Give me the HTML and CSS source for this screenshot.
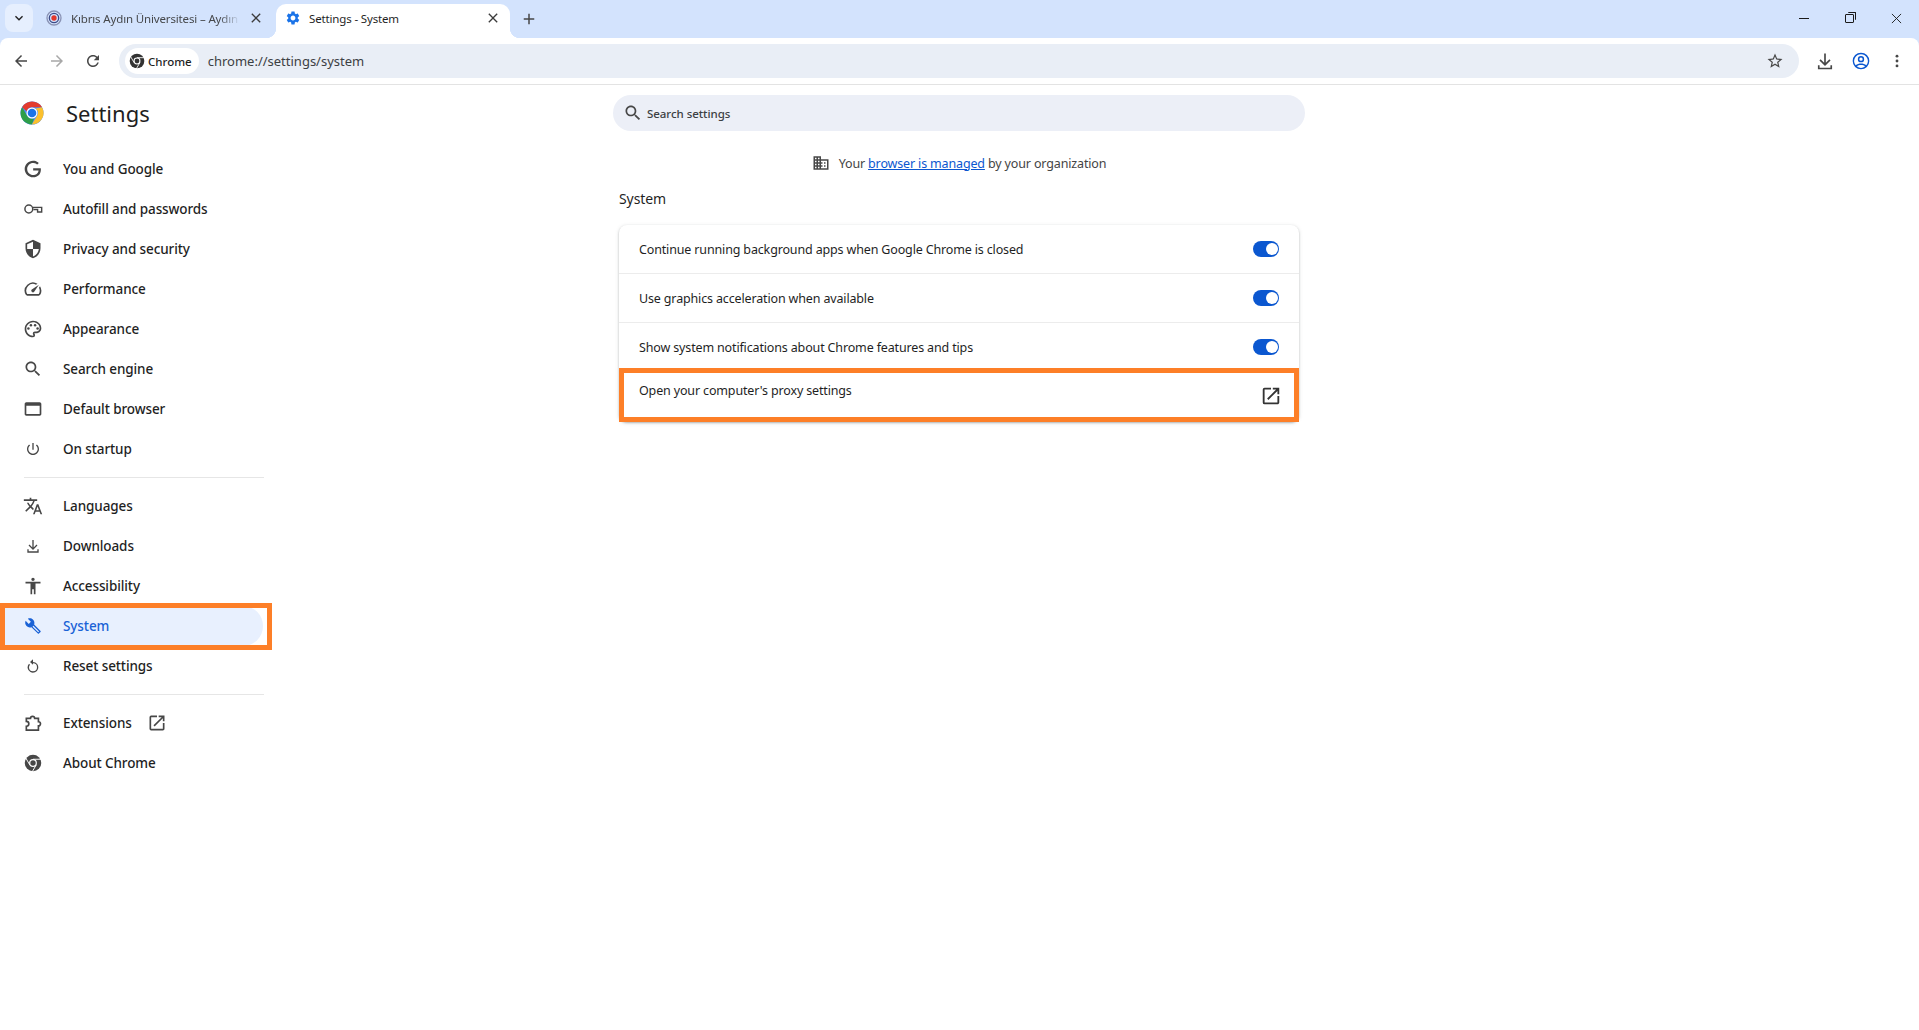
FILE: index.html
```html
<!DOCTYPE html>
<html lang="en">
<head>
  <meta charset="UTF-8" />
  <title>Settings - System</title>
  <link rel="stylesheet" href="styles.css">
</head>
<body>

  <!-- Icon sprite -->
  <svg class="sprite" xmlns="http://www.w3.org/2000/svg">
    <symbol id="i-gear" viewBox="0 0 24 24"><path d="M19.14 12.94c.04-.3.06-.61.06-.94 0-.32-.02-.64-.07-.94l2.03-1.58c.18-.14.23-.41.12-.61l-1.92-3.32c-.12-.22-.37-.29-.59-.22l-2.39.96c-.5-.38-1.03-.7-1.62-.94l-.36-2.54c-.04-.24-.24-.41-.48-.41h-3.84c-.24 0-.43.17-.47.41l-.36 2.54c-.59.24-1.13.57-1.62.94l-2.39-.96c-.22-.08-.47 0-.59.22L2.74 8.87c-.12.21-.08.47.12.61l2.03 1.58c-.05.3-.09.63-.09.94s.02.64.07.94l-2.03 1.58c-.18.14-.23.41-.12.61l1.92 3.32c.12.22.37.29.59.22l2.39-.96c.5.38 1.03.7 1.62.94l.36 2.54c.05.24.24.41.48.41h3.84c.24 0 .44-.17.47-.41l.36-2.54c.59-.24 1.13-.56 1.62-.94l2.39.96c.22.08.47 0 .59-.22l1.92-3.32c.12-.22.07-.47-.12-.61l-2.01-1.58zM12 15.6c-1.98 0-3.6-1.62-3.6-3.6s1.62-3.6 3.6-3.6 3.6 1.62 3.6 3.6-1.62 3.6-3.6 3.6z"/></symbol>
    <symbol id="i-close" viewBox="0 0 24 24"><path d="M19 6.41 17.59 5 12 10.59 6.41 5 5 6.41 10.59 12 5 17.59 6.41 19 12 13.41 17.59 19 19 17.59 13.41 12z"/></symbol>
    <symbol id="i-plus" viewBox="0 0 24 24"><path d="M19 13h-6v6h-2v-6H5v-2h6V5h2v6h6v2z"/></symbol>
    <symbol id="i-down" viewBox="0 0 24 24"><path d="M7.41 8.59 12 13.17l4.59-4.58L18 10l-6 6-6-6z"/></symbol>
    <symbol id="i-back" viewBox="0 0 24 24"><path d="M20 11H7.83l5.59-5.59L12 4l-8 8 8 8 1.41-1.41L7.83 13H20v-2z"/></symbol>
    <symbol id="i-forward" viewBox="0 0 24 24"><path d="m12 4-1.41 1.41L16.17 11H4v2h12.17l-5.58 5.59L12 20l8-8z"/></symbol>
    <symbol id="i-reload" viewBox="0 0 24 24"><path d="M17.65 6.35C16.2 4.9 14.21 4 12 4c-4.42 0-7.99 3.58-7.99 8s3.57 8 7.99 8c3.73 0 6.84-2.55 7.73-6h-2.08c-.82 2.33-3.04 4-5.65 4-3.31 0-6-2.69-6-6s2.69-6 6-6c1.66 0 3.14.69 4.22 1.78L13 11h7V4l-2.35 2.35z"/></symbol>
    <symbol id="i-chrome" viewBox="0 0 24 24">
      <circle cx="12" cy="12" r="11"/>
      <path d="M12 7H23M7.700 14.500 2.200 5M16.300 14.500 10.800 24" fill="none" stroke="#fff" stroke-width="1.300"/>
      <circle cx="12" cy="12" r="5.200" fill="#fff"/>
      <circle cx="12" cy="12" r="3.600"/>
    </symbol>
    <symbol id="i-star" viewBox="0 0 24 24"><path d="M22 9.24l-7.19-.62L12 2 9.19 8.63 2 9.24l5.46 4.73L5.82 21 12 17.27 18.18 21l-1.63-7.03L22 9.24zM12 15.4l-3.76 2.27 1-4.28-3.32-2.88 4.38-.38L12 6.1l1.71 4.04 4.38.38-3.32 2.88 1 4.28L12 15.4z"/></symbol>
    <symbol id="i-download" viewBox="0 0 24 24"><path d="M11 3h2v11.2l4.3-4.3 1.4 1.4-6.7 6.7-6.7-6.7 1.4-1.4 4.3 4.3V3zM3.500 17h2v3h13v-3h2v5h-17v-5z"/></symbol>
    <symbol id="i-account" viewBox="0 0 24 24"><path fill-rule="evenodd" d="M12 2a10 10 0 1 0 0 20 10 10 0 0 0 0-20zm0 1.800a8.200 8.200 0 0 1 6.400 13.300c-1.700-1.400-4-2.100-6.400-2.100s-4.700.7-6.400 2.100A8.200 8.200 0 0 1 12 3.800zM12 6a3.800 3.800 0 1 0 0 7.600A3.800 3.800 0 0 0 12 6zm0 1.800a2 2 0 1 1 0 4 2 2 0 0 1 0-4zm0 9c1.900 0 3.700.5 5.100 1.500a8.200 8.200 0 0 1-10.200 0c1.400-1 3.200-1.500 5.100-1.500z"/></symbol>
    <symbol id="i-dots" viewBox="0 0 24 24"><circle cx="12" cy="5.500" r="1.900"/><circle cx="12" cy="12" r="1.900"/><circle cx="12" cy="18.500" r="1.900"/></symbol>
    <symbol id="i-google" viewBox="0 0 24 24"><path d="M21.350 11.100h-9.170v2.730h6.510c-.33 3.810-3.500 5.440-6.500 5.440C8.360 19.270 5 16.250 5 12c0-4.100 3.200-7.270 7.200-7.270 3.090 0 4.900 1.970 4.900 1.970L19 4.720S16.560 2 12.100 2C6.420 2 2 6.800 2 12c0 5.050 4.130 10 10.220 10 5.350 0 9.250-3.670 9.250-9.090 0-1.150-.12-1.810-.12-1.810z"/></symbol>
    <symbol id="i-key" viewBox="0 0 24 24">
      <circle cx="7" cy="12" r="4.700" fill="none" stroke="#474747" stroke-width="1.800"/>
      <path d="M12 10H22.400V15.500H17.500V12.500H12.500" fill="none" stroke="#474747" stroke-width="1.700"/>
    </symbol>
    <symbol id="i-shield" viewBox="0 0 24 24"><path d="M12 1 3 5v6c0 5.550 3.840 10.740 9 12 5.160-1.260 9-6.450 9-12V5l-9-4zm0 10.990h7c-.53 4.120-3.280 7.790-7 8.940V12H5V6.300l7-3.110v8.800z"/></symbol>
    <symbol id="i-speed" viewBox="0 0 24 24"><path d="m20.380 8.570-1.230 1.850a8 8 0 0 1-.22 7.580H5.070A8 8 0 0 1 15.580 6.850l1.850-1.230A10 10 0 0 0 3.350 19a2 2 0 0 0 1.720 1h13.850a2 2 0 0 0 1.740-1 10 10 0 0 0-.27-10.440zm-9.790 6.840a2 2 0 0 0 2.830 0l5.660-8.490-8.490 5.660a2 2 0 0 0 0 2.830z"/></symbol>
    <symbol id="i-palette" viewBox="0 0 24 24"><path d="M12 22C6.490 22 2 17.510 2 12S6.490 2 12 2s10 4.040 10 9c0 3.310-2.690 6-6 6h-1.770c-.28 0-.5.22-.5.5 0 .12.05.23.13.33.41.47.64 1.060.64 1.670A2.500 2.500 0 0 1 12 22zm0-18c-4.410 0-8 3.590-8 8s3.590 8 8 8c.28 0 .5-.22.5-.5a.54.54 0 0 0-.14-.35c-.41-.46-.63-1.050-.63-1.650a2.500 2.500 0 0 1 2.500-2.500H16c2.210 0 4-1.790 4-4 0-3.860-3.590-7-8-7z"/><circle cx="6.500" cy="11.500" r="1.500"/><circle cx="9.500" cy="7.500" r="1.500"/><circle cx="14.500" cy="7.500" r="1.500"/><circle cx="17.500" cy="11.500" r="1.500"/></symbol>
    <symbol id="i-search" viewBox="0 0 24 24"><path d="M15.500 14h-.79l-.28-.27C15.410 12.590 16 11.110 16 9.500 16 5.910 13.090 3 9.500 3S3 5.910 3 9.500 5.910 16 9.500 16c1.610 0 3.090-.59 4.230-1.570l.27.28v.79l5 4.990L20.490 19l-4.990-5zm-6 0C7.010 14 5 11.990 5 9.500S7.010 5 9.500 5 14 7.010 14 9.500 11.990 14 9.500 14z"/></symbol>
    <symbol id="i-browser" viewBox="0 0 24 24"><path d="M20 4H4c-1.110 0-2 .9-2 2v12c0 1.100.89 2 2 2h16c1.100 0 2-.9 2-2V6c0-1.100-.89-2-2-2zm0 14H4V8h16v10z"/></symbol>
    <symbol id="i-power" viewBox="0 0 24 24"><path d="M13 3h-2v10h2V3zm4.830 2.170-1.420 1.420C17.990 7.860 19 9.810 19 12c0 3.870-3.130 7-7 7s-7-3.130-7-7c0-2.190 1.010-4.140 2.580-5.420L6.170 5.170C4.230 6.820 3 9.260 3 12c0 4.970 4.030 9 9 9s9-4.030 9-9c0-2.740-1.230-5.180-3.170-6.830z"/></symbol>
    <symbol id="i-translate" viewBox="0 0 24 24"><path d="m12.870 15.070-2.540-2.510.03-.03c1.740-1.940 2.980-4.170 3.710-6.530H17V4h-7V2H8v2H1v1.990h11.170C11.500 7.920 10.440 9.750 9 11.350 8.070 10.320 7.300 9.190 6.690 8h-2c.73 1.630 1.730 3.170 2.980 4.560l-5.090 5.020L4 19l5-5 3.110 3.110.76-2.040zM18.500 10h-2L12 22h2l1.120-3h4.750L21 22h2l-4.500-12zm-2.620 7 1.620-4.330L19.120 17h-3.240z"/></symbol>
    <symbol id="i-access" viewBox="0 0 24 24"><path d="M12 2c1.100 0 2 .9 2 2s-.9 2-2 2-2-.9-2-2 .9-2 2-2zm9 7h-6v13h-2v-6h-2v6H9V9H3V7h18v2z"/></symbol>
    <symbol id="i-wrench" viewBox="0 0 24 24">
      <path d="M22.700 19l-9.100-9.100c.9-2.300.4-5-1.500-6.900-2-2-5-2.400-7.400-1.300L9 6 6 9 1.600 4.700C.4 7.100.9 10.100 2.900 12.100c1.900 1.900 4.600 2.400 6.900 1.500l9.100 9.100c.4.4 1 .4 1.400 0l2.300-2.300c.5-.4.5-1.100.1-1.400z"/>
      <path d="M12 12.300 20 20.300" stroke="#e8f0fe" stroke-width="1.700"/>
    </symbol>
    <symbol id="i-restore" viewBox="0 0 24 24"><path d="M12 6V2L7.500 6l4.500 4V8a6 6 0 1 1-6 6 6 6 0 0 1 1.500-4L6 8.600A8 8 0 1 0 12 6z"/></symbol>
    <symbol id="i-extension" viewBox="0 0 24 24"><path d="M4 6.500H9a2.500 2.500 0 0 1 5 0H18.500V10.500a2.500 2.500 0 0 1 0 5V20.500H4V16a2.500 2.500 0 0 0 0-6z" fill="none" stroke="#474747" stroke-width="2"/></symbol>
    <symbol id="i-open" viewBox="0 0 24 24"><path d="M19 19H5V5h7V3H5a2 2 0 0 0-2 2v14a2 2 0 0 0 2 2h14c1.100 0 2-.9 2-2v-7h-2v7zM14 3v2h3.590l-9.830 9.830 1.410 1.410L19 6.410V10h2V3h-7z"/></symbol>
    <symbol id="i-domain" viewBox="0 0 24 24"><path d="M12 7V3H2v18h20V7H12zM6 19H4v-2h2v2zm0-4H4v-2h2v2zm0-4H4V9h2v2zm0-4H4V5h2v2zm4 12H8v-2h2v2zm0-4H8v-2h2v2zm0-4H8V9h2v2zm0-4H8V5h2v2zm10 12h-8v-2h2v-2h-2v-2h2v-2h-2V9h8v10zm-2-8h-2v2h2v-2zm0 4h-2v2h2v-2z"/></symbol>
    <symbol id="i-logo" viewBox="0 0 24 24">
      <circle cx="12" cy="12" r="11.500" fill="#4c8bf5"/>
      <path fill="#e33b2e" d="M2.100 6.200A11.500 11.500 0 0 1 22 6.300H12a5.800 5.800 0 0 0-5.400 3.900z"/>
      <path fill="#fbc02d" d="M22 6.300a11.500 11.500 0 0 1-10.200 17.200l5.300-8.700A5.800 5.800 0 0 0 15.500 7.400z"/>
      <path fill="#2e9e49" d="M2.100 6.200l5 8.600a5.800 5.800 0 0 0 7 2.600l-2.300 6.100A11.500 11.500 0 0 1 2.100 6.200z"/>
      <circle cx="12" cy="12" r="5.500" fill="#fff"/>
      <circle cx="12" cy="12" r="4.300" fill="#1a73e8"/>
    </symbol>
    <symbol id="i-favicon" viewBox="0 0 24 24">
      <circle cx="12" cy="12" r="10.500" fill="none" stroke="#8a93b5" stroke-width="2"/>
      <circle cx="12" cy="12" r="7" fill="none" stroke="#3c4a86" stroke-width="2"/>
      <circle cx="12" cy="12" r="4" fill="#e2382b"/>
    </symbol>
  </svg>

  <header class="browser-frame">
    <div class="tabstrip">
      <button class="tab-search"><svg class="ic ic-16"><use href="#i-down"/></svg></button>
      <div class="tab">
        <svg class="ic ic-16 tab-favicon"><use href="#i-favicon"/></svg>
        <span class="tab-title faded">Kıbrıs Aydın Üniversitesi – Aydın</span>
        <svg class="ic ic-16 tab-close"><use href="#i-close"/></svg>
      </div>
      <div class="tab active">
        <svg class="ic ic-16 tab-favicon gear"><use href="#i-gear"/></svg>
        <span class="tab-title">Settings - System</span>
        <svg class="ic ic-16 tab-close"><use href="#i-close"/></svg>
      </div>
      <svg class="ic ic-18 new-tab"><use href="#i-plus"/></svg>
      <div class="window-controls">
        <span class="win-btn"><span class="win-min"></span></span>
        <span class="win-btn"><span class="win-restore"></span></span>
        <span class="win-btn"><svg class="win-close" viewBox="0 0 12 12"><path d="M1 1l10 10M11 1L1 11"/></svg></span>
      </div>
    </div>

    <div class="toolbar">
      <svg class="ic ic-18 tool"><use href="#i-back"/></svg>
      <svg class="ic ic-18 tool disabled"><use href="#i-forward"/></svg>
      <svg class="ic ic-18 tool"><use href="#i-reload"/></svg>
      <div class="omnibox">
        <span class="chip"><svg class="ic ic-16"><use href="#i-chrome"/></svg>Chrome</span>
        <span class="url">chrome://settings/system</span>
        <svg class="ic ic-18 star"><use href="#i-star"/></svg>
      </div>
      <svg class="ic ic-20 tool-right"><use href="#i-download"/></svg>
      <svg class="ic ic-20 tool-right account"><use href="#i-account"/></svg>
      <svg class="ic ic-18 tool-right menu"><use href="#i-dots"/></svg>
    </div>
  </header>

  <div class="page">
    <nav class="sidebar">
      <div class="brand">
        <svg class="brand-logo"><use href="#i-logo"/></svg>
        <span class="brand-name">Settings</span>
      </div>
      <a class="nav-item"><svg class="ic ic-20"><use href="#i-google"/></svg>You and Google</a>
      <a class="nav-item"><svg class="ic ic-20"><use href="#i-key"/></svg>Autofill and passwords</a>
      <a class="nav-item"><svg class="ic ic-20"><use href="#i-shield"/></svg>Privacy and security</a>
      <a class="nav-item"><svg class="ic ic-20"><use href="#i-speed"/></svg>Performance</a>
      <a class="nav-item"><svg class="ic ic-20"><use href="#i-palette"/></svg>Appearance</a>
      <a class="nav-item"><svg class="ic ic-20"><use href="#i-search"/></svg>Search engine</a>
      <a class="nav-item"><svg class="ic ic-20"><use href="#i-browser"/></svg>Default browser</a>
      <a class="nav-item"><svg class="ic ic-20 small"><use href="#i-power"/></svg>On startup</a>
      <div class="nav-divider"></div>
      <a class="nav-item"><svg class="ic ic-20"><use href="#i-translate"/></svg>Languages</a>
      <a class="nav-item"><svg class="ic ic-20 small"><use href="#i-download"/></svg>Downloads</a>
      <a class="nav-item"><svg class="ic ic-20"><use href="#i-access"/></svg>Accessibility</a>
      <a class="nav-item selected">
        <svg class="ic ic-20 wrench"><use href="#i-wrench"/></svg>System
        <span class="callout"></span>
      </a>
      <a class="nav-item"><svg class="ic ic-20 small"><use href="#i-restore"/></svg>Reset settings</a>
      <div class="nav-divider"></div>
      <a class="nav-item"><svg class="ic ic-20"><use href="#i-extension"/></svg>Extensions<svg class="ic ic-20 nav-open"><use href="#i-open"/></svg></a>
      <a class="nav-item"><svg class="ic ic-20 chrome-mark"><use href="#i-chrome"/></svg>About Chrome</a>
    </nav>

    <main class="content">
      <div class="search-box">
        <svg class="ic ic-20"><use href="#i-search"/></svg>
        <span>Search settings</span>
      </div>
      <div class="managed">
        <svg class="ic ic-18"><use href="#i-domain"/></svg>
        <span>Your <a class="link">browser is managed</a> by your organization</span>
      </div>
      <h2 class="section-title">System</h2>
      <section class="card">
        <div class="row">
          <span>Continue running background apps when Google Chrome is closed</span>
          <span class="toggle"></span>
        </div>
        <div class="row">
          <span>Use graphics acceleration when available</span>
          <span class="toggle"></span>
        </div>
        <div class="row">
          <span>Show system notifications about Chrome features and tips</span>
          <span class="toggle"></span>
        </div>
        <div class="row row-link">
          <span class="row-link-label">Open your computer's proxy settings</span>
          <svg class="ic row-open"><use href="#i-open"/></svg>
          <span class="callout"></span>
        </div>
      </section>
    </main>
  </div>

</body>
</html>
```

FILE: styles.css
```css
html, body {
  margin: 0;
  padding: 0;
  height: 100%;
  background: #fff;
  color: #1f1f1f;
  font-family: "Noto Sans", "Open Sans", sans-serif;
  font-size: 12.5px;
  letter-spacing: -0.15px;
}

.sprite {
  display: none;
}

/* Icons */
.ic {
  flex-shrink: 0;
  fill: #474747;
}

.ic-16 {
  width: 16px;
  height: 16px;
}

.ic-18 {
  width: 18px;
  height: 18px;
}

.ic-20 {
  width: 20px;
  height: 20px;
}

.small {
  transform: scale(0.8);
}

.wrench {
  transform: scale(0.85);
}

.chrome-mark {
  transform: scale(0.9);
}

/* Tab strip */
.browser-frame {
  background: #d3e3fd;
}

.tabstrip {
  display: flex;
  align-items: flex-end;
  height: 38px;
  padding-left: 5px;
}

.tab-search {
  display: flex;
  align-items: center;
  justify-content: center;
  width: 28px;
  height: 28px;
  margin: 0 0 6px;
  padding: 0;
  border: none;
  border-radius: 8px;
  background: #e6effe;
}

.tab-search .ic {
  fill: #1f1f1f;
}

.tab {
  display: flex;
  align-items: center;
  width: 243px;
  height: 34px;
  padding: 0 12px 6px 13px;
  box-sizing: border-box;
  color: #45474a;
  font-size: 11.5px;
}

.tab.active {
  position: relative;
  width: 234px;
  padding-left: 9px;
  padding-right: 9px;
  border-radius: 10px 10px 0 0;
  background: #fff;
  color: #1f1f1f;
}

.tab.active::before,
.tab.active::after {
  content: "";
  position: absolute;
  bottom: 0;
  width: 10px;
  height: 10px;
}

.tab.active::before {
  left: -10px;
  background: radial-gradient(circle at 0 0, #d3e3fd 10px, #fff 10.5px);
}

.tab.active::after {
  right: -10px;
  background: radial-gradient(circle at 100% 0, #d3e3fd 10px, #fff 10.5px);
}

.tab-favicon {
  margin-right: 9px;
}

.gear {
  margin-right: 8px;
  fill: #1a73e8;
}

.tab-title {
  flex: 1;
  overflow: hidden;
  white-space: nowrap;
}

.faded {
  -webkit-mask-image: linear-gradient(to right, #000 88%, transparent);
  mask-image: linear-gradient(to right, #000 88%, transparent);
}

.tab-close {
  margin-left: 8px;
  fill: #3c3c3c;
}

.new-tab {
  margin: 0 0 10px 10px;
}

.window-controls {
  display: flex;
  align-self: flex-start;
  margin-left: auto;
}

.win-btn {
  display: flex;
  align-items: center;
  justify-content: center;
  width: 46px;
  height: 36px;
}

.win-min {
  width: 10px;
  border-top: 1px solid #1a1a1a;
}

.win-restore {
  position: relative;
  width: 7px;
  height: 7px;
  margin-right: 2px;
  border: 1px solid #1a1a1a;
  border-radius: 1px;
}

.win-restore::after {
  content: "";
  position: absolute;
  top: -3px;
  right: -3px;
  width: 7px;
  height: 7px;
  border-top: 1px solid #1a1a1a;
  border-right: 1px solid #1a1a1a;
  border-radius: 1px;
}

.win-close {
  width: 11px;
  height: 11px;
  fill: none;
  stroke: #1a1a1a;
}

/* Toolbar */
.toolbar {
  display: flex;
  align-items: center;
  height: 46px;
  padding-left: 12px;
  background: #fff;
  border-bottom: 1px solid #e3e3e3;
  border-radius: 8px 8px 0 0;
}

.tool {
  margin-right: 18px;
}

.tool.disabled {
  fill: #a8a8a8;
}

.omnibox {
  display: flex;
  align-items: center;
  width: 1680px;
  height: 34px;
  margin-left: -1px;
  padding: 0 15px 0 6px;
  box-sizing: border-box;
  border-radius: 17px;
  background: #e9eef6;
}

.chip {
  display: flex;
  align-items: center;
  gap: 3px;
  height: 26px;
  padding: 0 7px 0 4px;
  border-radius: 13px;
  background: #fff;
  font-size: 11.5px;
  font-weight: 500;
  letter-spacing: 0;
}

.chip .ic {
  fill: #333;
}

.url {
  flex: 1;
  margin-left: 9px;
  font-size: 13px;
  color: #3c4043;
  letter-spacing: 0;
}

.tool-right {
  margin-left: 16px;
}

.menu {
  margin-left: 17px;
}

.account {
  fill: #0b57d0;
}

/* Page */
.page {
  display: flex;
}

.sidebar {
  flex: 0 0 271px;
}

.brand {
  display: flex;
  align-items: center;
  height: 64px;
  padding: 0 0 8px 20px;
  box-sizing: border-box;
}

.brand-logo {
  width: 24px;
  height: 24px;
  margin-right: 22px;
}

.brand-name {
  font-size: 22px;
  letter-spacing: 0;
}

.nav-item {
  position: relative;
  display: flex;
  align-items: center;
  width: 263px;
  height: 40px;
  padding-left: 23px;
  box-sizing: border-box;
  font-size: 13.5px;
  font-weight: 500;
  letter-spacing: -0.1px;
}

.nav-item > .ic:first-child {
  margin-right: 20px;
}

.nav-item.selected {
  border-radius: 0 20px 20px 0;
  background: #e8f0fe;
  color: #1a62d6;
}

.nav-item.selected .ic {
  fill: #1a62d6;
}

.nav-open {
  margin-left: 15px;
}

.nav-divider {
  width: 240px;
  margin: 8px 0 8px 24px;
  border-top: 1px solid #e6e6e6;
}

/* The orange annotation boxes drawn over the screenshot */
.callout {
  position: absolute;
  border: 5px solid #fd7f28;
  pointer-events: none;
}

.nav-item .callout {
  top: -3px;
  bottom: -4px;
  left: 0;
  right: -9px;
}

.row .callout {
  top: -3px;
  bottom: 0;
  left: 0;
  right: 0;
}

/* Main column */
.content {
  width: 692px;
  margin-left: 342px;
  padding-top: 10px;
}

.search-box {
  display: flex;
  align-items: center;
  gap: 4px;
  height: 36px;
  padding-left: 10px;
  border-radius: 18px;
  background: #eceff7;
  font-size: 11.5px;
  font-weight: 500;
  letter-spacing: -0.05px;
  color: #3c4043;
}

.managed {
  display: flex;
  align-items: center;
  justify-content: center;
  gap: 9px;
  height: 18px;
  margin-top: 23px;
  color: #444;
}

.link {
  color: #0b57d0;
  text-decoration: underline;
}

.section-title {
  margin: 18px 0 0 6px;
  font-size: 14px;
  font-weight: 400;
  line-height: 18px;
  letter-spacing: -0.1px;
}

.card {
  width: 680px;
  margin: 17px 0 0 6px;
  border-radius: 8px;
  background: #fff;
  box-shadow: 0 1px 2px rgba(60, 64, 67, 0.3), 0 1px 4px rgba(60, 64, 67, 0.15);
}

.row {
  position: relative;
  display: flex;
  align-items: center;
  justify-content: space-between;
  height: 48px;
  padding: 0 20px;
  border-bottom: 1px solid #ececec;
}

.row:nth-child(3) {
  border-bottom: none;
}

.row-link {
  height: 51px;
  border-bottom: none;
}

.row-link-label {
  align-self: flex-start;
  margin-top: 11px;
}

.row-open {
  width: 22px;
  height: 22px;
  margin: -2px -3px 0 0;
  fill: #333;
}

.toggle {
  position: relative;
  width: 26px;
  height: 16px;
  border-radius: 8px;
  background: #0b57d0;
}

.toggle::after {
  content: "";
  position: absolute;
  top: 2px;
  right: 1px;
  width: 12px;
  height: 12px;
  border-radius: 50%;
  background: #fff;
}
```
